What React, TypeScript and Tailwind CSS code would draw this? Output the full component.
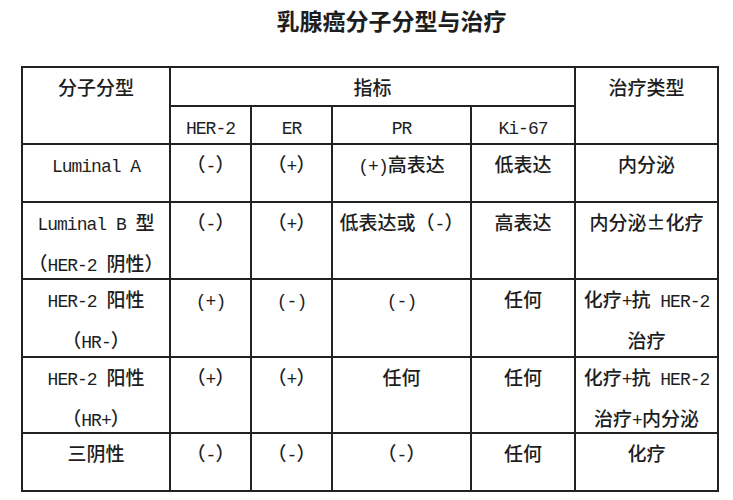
import React from "react"

// ASCII runs get a half-width mono font, like the SimSun-style latin in the picture
function Txt({ s }: { s: string }) {
  const parts = s.split(/([\x20-\x7e]+)/).filter(Boolean)
  return (
    <>
      {parts.map((p, i) =>
        /^[\x20-\x7e]+$/.test(p) ? (
          <span key={i} className="font-['Liberation_Mono',monospace] text-[18px] tracking-[-1px] whitespace-pre">
            {p}
          </span>
        ) : (
          <span key={i}>{p}</span>
        )
      )}
    </>
  )
}

function Cell({ lines, className = "" }: { lines: string[]; className?: string }) {
  return (
    <div className={"bg-white text-center leading-[38px] " + className}>
      {lines.map((l, i) => (
        <div key={i}>
          <Txt s={l} />
        </div>
      ))}
    </div>
  )
}

const rows: string[][][] = [
  [["Luminal A"], ["（-）"], ["（+）"], ["(+)高表达"], ["低表达"], ["内分泌"]],
  [["Luminal B 型", "（HER-2 阴性）"], ["（-）"], ["（+）"], ["低表达或（-）"], ["高表达"], ["内分泌±化疗"]],
  [["HER-2 阳性", "（HR-）"], ["(+)"], ["(-)"], ["(-)"], ["任何"], ["化疗+抗 HER-2", "治疗"]],
  [["HER-2 阳性", "（HR+）"], ["（+）"], ["（+）"], ["任何"], ["任何"], ["化疗+抗 HER-2", "治疗+内分泌"]],
  [["三阴性"], ["（-）"], ["（-）"], ["（-）"], ["任何"], ["化疗"]],
]

export default function App() {
  return (
    <div className="w-[733px] h-[500px] bg-white text-[#1e1e1e] font-['Noto_Sans_CJK_SC',sans-serif] overflow-hidden">
      <h1 className="h-[40px] leading-[40px] pl-[50px] text-center text-[23px] font-bold">乳腺癌分子分型与治疗</h1>
      <div className="mt-[26px] ml-[21px] w-fit p-[2px] bg-[#222] grid grid-cols-[146px_79px_79px_137px_102px_141px] grid-rows-[37px_36px_56px_75px_76px_74px_56px] gap-[2px] text-[19px] font-medium">
        <Cell lines={["分子分型"]} className="row-span-2" />
        <Cell lines={["指标"]} className="col-span-4" />
        <Cell lines={["治疗类型"]} className="row-span-2" />
        <Cell lines={["HER-2"]} />
        <Cell lines={["ER"]} />
        <Cell lines={["PR"]} />
        <Cell lines={["Ki-67"]} />
        {rows.map((r, ri) => r.map((c, ci) => <Cell key={ri + "-" + ci} lines={c} />))}
      </div>
    </div>
  )
}
